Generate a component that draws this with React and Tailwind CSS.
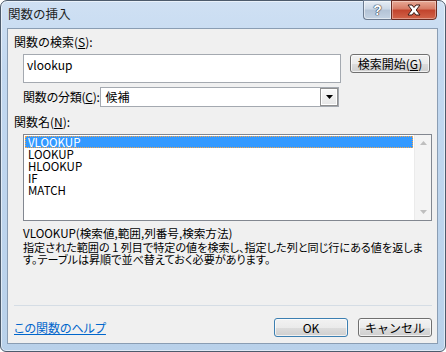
export default function App() {
  const btn =
    "flex items-center justify-center rounded-[3px] border border-[#707070] bg-[linear-gradient(180deg,#f2f2f2_0%,#ebebeb_50%,#dddddd_51%,#cfcfcf_100%)] shadow-[inset_0_0_0_1px_rgba(255,255,255,0.7)] leading-[12px] text-[12px] whitespace-nowrap";
  const items = ["VLOOKUP", "LOOKUP", "HLOOKUP", "IF", "MATCH"];
  return (
    <div className="w-[446px] h-[352px] bg-white">
      <div className="relative w-[446px] h-[352px] rounded-t-[7px] rounded-b-[6px] border border-[#4d5b6c] bg-[linear-gradient(180deg,#cfe0f3_0%,#c2d8f0_20%,#b9d1ea_100%)] shadow-[inset_0_0_0_1px_rgba(255,255,255,0.55)] flex flex-col font-['Noto_Sans_CJK_JP','Liberation_Sans',sans-serif] text-[12px] text-black">
        {/* title bar */}
        <div className="h-[27px] shrink-0 flex items-start justify-between pr-[8px]">
          <div className="pl-[7px] pt-[6px] leading-[14px] text-[12.5px] text-[#1e1e1e]">関数の挿入</div>
          <div className="flex -mt-[1px]">
            <div className="w-[28px] h-[20px] rounded-bl-[4px] border border-[#6c7b8f] border-r-0 bg-[linear-gradient(180deg,#e6edf5_0%,#ccd8e6_45%,#b3c3d6_50%,#c4d3e3_100%)] shadow-[inset_0_0_0_1px_rgba(255,255,255,0.5)] flex items-center justify-center">
              <span className="font-['Liberation_Sans',sans-serif] font-bold text-[14px] leading-[14px] text-white [text-shadow:0_0_1px_#2a3340,0_0_1px_#2a3340,0_0_1px_#2a3340]">?</span>
            </div>
            <div className="w-[46px] h-[20px] rounded-br-[4px] border border-[#6a2c22] bg-[linear-gradient(180deg,#e8a996_0%,#d67a64_45%,#c2432c_50%,#d2644a_100%)] shadow-[inset_0_0_0_1px_rgba(255,255,255,0.35)] flex items-center justify-center">
              <svg width="16" height="12" viewBox="0 0 16 12">
                <path
                  d="M2 1 H6 L8 3.5 L10 1 H14 L10.2 6 L14 11 H10 L8 8.5 L6 11 H2 L5.8 6 Z"
                  fill="#ffffff"
                  stroke="#3b1a14"
                  strokeWidth="1"
                  strokeLinejoin="round"
                />
              </svg>
            </div>
          </div>
        </div>

        {/* client area */}
        <div className="flex-1 ml-[6px] mr-[7px] mb-[7px] border border-[#8a9db3] bg-[#f0f0f0] flex flex-col">
          <div className="mt-[7px] ml-[6px] leading-[12px] whitespace-nowrap">
            関数の検索(<span className="underline">S</span>):
          </div>
          <div className="mt-[6px] ml-[15px] flex items-start">
            <div className="w-[318px] h-[29px] border border-[#a4a9b0] bg-white pl-[3px] pt-[4px] leading-[12px]">vlookup</div>
            <div className={"ml-[9px] w-[80px] h-[19px] " + btn}>
              検索開始(<span className="underline">G</span>)
            </div>
          </div>
          <div className="mt-[4px] ml-[15px] flex items-center">
            <div className="shrink-0 pr-[1px] leading-[12px] whitespace-nowrap tracking-[-0.3px]">
              関数の分類(<span className="underline">C</span>):
            </div>
            <div className="w-[239px] h-[20px] border border-[#a4a9b0] bg-white flex items-stretch">
              <div className="flex-1 pl-[4px] flex items-center leading-[12px]">候補</div>
              <div className="w-[18px] border border-[#8f8f8f] bg-[linear-gradient(180deg,#fafafa_0%,#e6e6e6_100%)] shadow-[inset_0_0_0_1px_#ffffff] flex items-center justify-center">
                <svg width="7" height="4" viewBox="0 0 7 4">
                  <path d="M0 0 H7 L3.5 4 Z" fill="#000" />
                </svg>
              </div>
            </div>
          </div>
          <div className="mt-[9px] ml-[6px] leading-[12px] whitespace-nowrap">
            関数名(<span className="underline">N</span>):
          </div>
          <div className="mt-[6px] ml-[15px] w-[409px] h-[87px] border border-[#828790] bg-white flex">
            <div className="flex-1 p-[1px] flex flex-col">
              {items.map((it, i) => (
                <div
                  key={it}
                  className={
                    "h-[12px] leading-[12px] text-[11.5px] pl-[3px] shrink-0 " +
                    (i === 0
                      ? "bg-[#3399ff] text-white outline-1 outline-dotted outline-offset-[-1px] outline-[#f7a64a]"
                      : "")
                  }
                >
                  {it}
                </div>
              ))}
            </div>
            <div className="w-[17px] bg-[#f4f4f4] border-l border-[#ebebeb] flex flex-col justify-between items-center py-[6px]">
              <svg width="7" height="4" viewBox="0 0 7 4">
                <path d="M3.5 0 L7 4 H0 Z" fill="#bfbfbf" />
              </svg>
              <svg width="7" height="4" viewBox="0 0 7 4">
                <path d="M0 0 H7 L3.5 4 Z" fill="#bfbfbf" />
              </svg>
            </div>
          </div>
          <div className="mt-[6px] ml-[15px] text-[11.6px] leading-[12px] whitespace-nowrap">VLOOKUP(検索値,範囲,列番号,検索方法)</div>
          <div className="mt-[2px] ml-[15px] text-[11.1px] leading-[12px] whitespace-nowrap [font-feature-settings:'palt']">
            指定された範囲の 1 列目で特定の値を検索し、指定した列と同じ行にある値を返しま
            <br />
            す。テーブルは昇順で並べ替えておく必要があります。
          </div>
          <div className="flex-1" />
          <div className="ml-[6px] w-[418px] h-[1px] bg-[#d5dde5]" />
          <div className="mt-[12px] mb-[6px] ml-[6px] mr-[5px] flex items-center">
            <a className="text-[#0066cc] underline leading-[12px] pt-[1px] [font-feature-settings:'palt']">この関数のヘルプ</a>
            <div className="flex-1" />
            <div className={"w-[74px] h-[19px] !border-[#3c7fb1] shadow-[inset_0_0_0_1px_#8fd6f6] " + btn}>OK</div>
            <div className={"ml-[10px] w-[74px] h-[19px] " + btn}>キャンセル</div>
          </div>
        </div>
      </div>
    </div>
  );
}
